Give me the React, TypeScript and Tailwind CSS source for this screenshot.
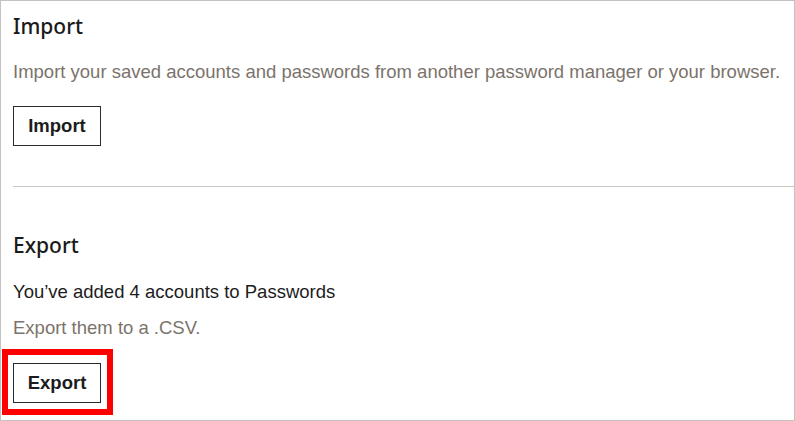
import React from 'react';

const font = { fontFamily: '"Liberation Sans", Arial, sans-serif' };
const headingFont = { fontFamily: '"Noto Sans", sans-serif' };

const OutlineButton: React.FC<{ label: string }> = ({ label }) => (
  <button className="block h-10 w-[88px] border border-[#2b2b2b] bg-white text-[18.5px] font-bold text-[#1c1c1c]">
    {label}
  </button>
);

export default function App() {
  return (
    <div
      className="w-[795px] h-[421px] border border-[#c2c2c2] bg-white overflow-hidden"
      style={font}
    >
      <section className="pl-3 pt-[11px]">
        <h2 className="text-[21px] leading-[28px] font-medium text-[#1a1a1a]" style={headingFont}>
          Import
        </h2>
        <p className="mt-[22px] text-[18.5px] leading-5 text-[#7b736b]">
          Import your saved accounts and passwords from another password manager or your browser.
        </p>
        <div className="mt-6">
          <OutlineButton label="Import" />
        </div>
      </section>

      <div className="ml-3 mt-10 border-t border-[#cbc7c3]" />

      <section className="pl-3 pt-[44px]">
        <h2 className="text-[21px] leading-[28px] font-medium text-[#1a1a1a]" style={headingFont}>
          Export
        </h2>
        <p className="mt-[23px] text-[18.5px] leading-5 text-[#1c1c1c]">
          You’ve added 4 accounts to Passwords
        </p>
        <p className="mt-4 text-[18.5px] leading-5 text-[#7b736b]">Export them to a .CSV.</p>
        <div className="-ml-[11px] mt-[11px] w-fit border-[6px] border-[#ff0000] pl-[5px] pr-[6px] pt-2 pb-[6px]">
          <OutlineButton label="Export" />
        </div>
      </section>
    </div>
  );
}
